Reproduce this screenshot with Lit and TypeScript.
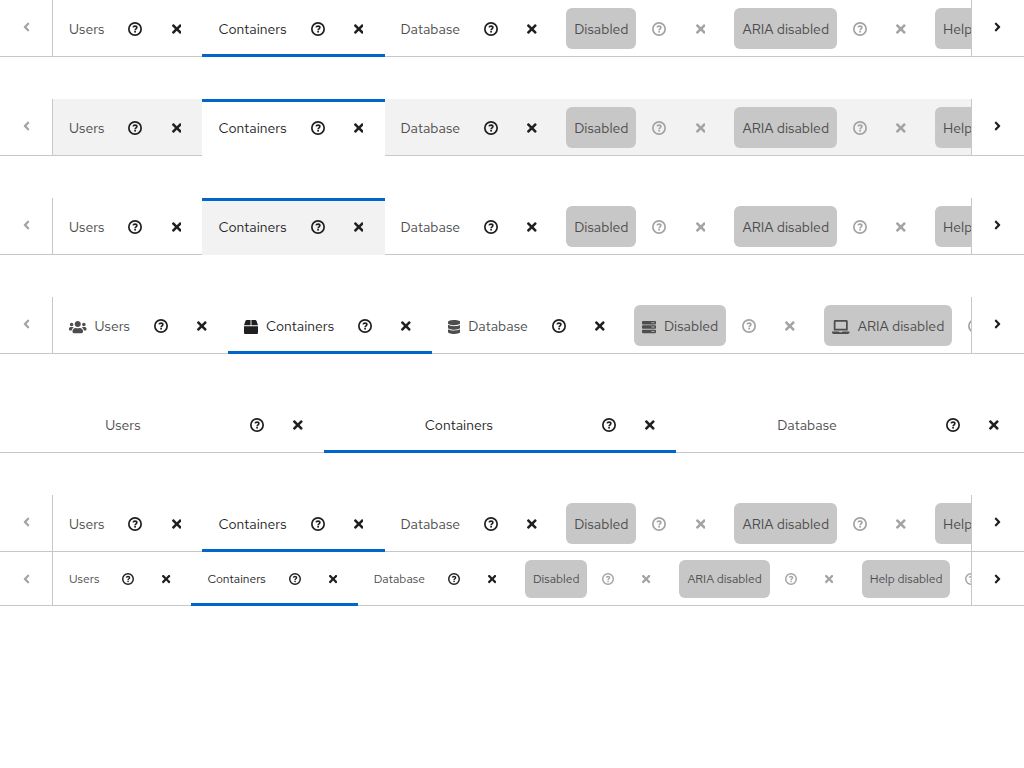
import { LitElement, html, css, svg, nothing } from "lit";
import { customElement, property } from "lit/decorators.js";
import { classMap } from "lit/directives/class-map.js";

interface Tab {
  label: string;
  icon: string;
  disabled?: boolean;
}

const TABS: Tab[] = [
  { label: "Users", icon: "users" },
  { label: "Containers", icon: "box" },
  { label: "Database", icon: "database" },
  { label: "Disabled", icon: "server", disabled: true },
  { label: "ARIA disabled", icon: "laptop", disabled: true },
  { label: "Help disabled", icon: "project", disabled: true },
];

const ICONS: Record<string, { width: number; path: string }> = {
  left: {
    width: 256,
    path: "M31.7 239l136-136c9.4-9.4 24.6-9.4 33.9 0l22.6 22.6c9.4 9.4 9.4 24.6 0 33.9L127.9 256l96.4 96.4c9.4 9.4 9.4 24.6 0 33.9L201.7 409c-9.4 9.4-24.6 9.4-33.9 0l-136-136c-9.5-9.4-9.5-24.6-.1-34z",
  },
  right: {
    width: 256,
    path: "M224.3 273l-136 136c-9.4 9.4-24.6 9.4-33.9 0l-22.6-22.6c-9.4-9.4-9.4-24.6 0-33.9l96.4-96.4-96.4-96.4c-9.4-9.4-9.4-24.6 0-33.9L54.3 103c9.4-9.4 24.6-9.4 33.9 0l136 136c9.5 9.4 9.5 24.6.1 34z",
  },
  close: {
    width: 352,
    path: "M242.72 256l100.07-100.07c12.28-12.28 12.28-32.19 0-44.48l-22.24-22.24c-12.28-12.28-32.19-12.28-44.48 0L176 189.28 75.93 89.21c-12.28-12.28-32.19-12.28-44.48 0L9.21 111.45c-12.28 12.28-12.28 32.19 0 44.48L109.28 256 9.21 356.07c-12.28 12.28-12.28 32.19 0 44.48l22.24 22.24c12.28 12.28 32.2 12.28 44.48 0L176 322.72l100.07 100.07c12.28 12.28 32.2 12.28 44.48 0l22.24-22.24c12.28-12.28 12.28-32.19 0-44.48L242.72 256z",
  },
  users: {
    width: 640,
    path: "M96 224c35.3 0 64-28.7 64-64s-28.7-64-64-64-64 28.7-64 64 28.7 64 64 64zm448 0c35.3 0 64-28.7 64-64s-28.7-64-64-64-64 28.7-64 64 28.7 64 64 64zm32 32h-64c-17.6 0-33.5 7.1-45.1 18.6 40.3 22.1 68.9 62 75.1 109.4h66c17.7 0 32-14.3 32-32v-32c0-35.3-28.7-64-64-64zm-256 0c61.9 0 112-50.1 112-112S381.9 32 320 32 208 82.1 208 144s50.1 112 112 112zm76.8 32h-8.3c-20.8 10-43.9 16-68.5 16s-47.6-6-68.5-16h-8.3C179.6 288 128 339.6 128 403.2V432c0 26.5 21.5 48 48 48h288c26.5 0 48-21.5 48-48v-28.8c0-63.6-51.6-115.2-115.2-115.2zm-223.7-13.4C161.5 263.1 145.6 256 128 256H64c-35.3 0-64 28.7-64 64v32c0 17.7 14.3 32 32 32h65.9c6.3-47.4 34.9-87.3 75.2-109.4z",
  },
  box: {
    width: 512,
    path: "M509.5 184.6L458.9 32.8C452.4 13.2 434.1 0 413.4 0H272v192h238.7c-.4-2.5-.4-5-1.2-7.4zM240 0H98.6c-20.7 0-39 13.2-45.5 32.8L2.5 184.6c-.8 2.4-.8 4.9-1.2 7.4H240V0zM0 224v240c0 26.5 21.5 48 48 48h416c26.5 0 48-21.5 48-48V224H0z",
  },
  database: {
    width: 448,
    path: "M448 73.143v45.714C448 159.143 347.667 192 224 192S0 159.143 0 118.857V73.143C0 32.857 100.333 0 224 0s224 32.857 224 73.143zM448 176v102.857C448 319.143 347.667 352 224 352S0 319.143 0 278.857V176c48.125 33.143 136.208 48.572 224 48.572S399.874 209.143 448 176zm0 160v102.857C448 479.143 347.667 512 224 512S0 479.143 0 438.857V336c48.125 33.143 136.208 48.572 224 48.572S399.874 369.143 448 336z",
  },
  server: {
    width: 512,
    path: "M480 160H32c-17.673 0-32-14.327-32-32V64c0-17.673 14.327-32 32-32h448c17.673 0 32 14.327 32 32v64c0 17.673-14.327 32-32 32zm-48-88c-13.255 0-24 10.745-24 24s10.745 24 24 24 24-10.745 24-24-10.745-24-24-24zm-64 0c-13.255 0-24 10.745-24 24s10.745 24 24 24 24-10.745 24-24-10.745-24-24-24zm112 248H32c-17.673 0-32-14.327-32-32v-64c0-17.673 14.327-32 32-32h448c17.673 0 32 14.327 32 32v64c0 17.673-14.327 32-32 32zm-48-88c-13.255 0-24 10.745-24 24s10.745 24 24 24 24-10.745 24-24-10.745-24-24-24zm-64 0c-13.255 0-24 10.745-24 24s10.745 24 24 24 24-10.745 24-24-10.745-24-24-24zm112 248H32c-17.673 0-32-14.327-32-32v-64c0-17.673 14.327-32 32-32h448c17.673 0 32 14.327 32 32v64c0 17.673-14.327 32-32 32zm-48-88c-13.255 0-24 10.745-24 24s10.745 24 24 24 24-10.745 24-24-10.745-24-24-24zm-64 0c-13.255 0-24 10.745-24 24s10.745 24 24 24 24-10.745 24-24-10.745-24-24-24z",
  },
  laptop: {
    width: 640,
    path: "M624 416H381.54c-.74 19.81-14.71 32-32.74 32H288c-18.69 0-33.02-17.47-32.77-32H16c-8.8 0-16 7.2-16 16v16c0 35.2 28.8 64 64 64h512c35.2 0 64-28.8 64-64v-16c0-8.8-7.2-16-16-16zM576 48c0-26.4-21.6-48-48-48H112C85.6 0 64 21.6 64 48v336h512V48zm-64 272H128V64h384v256z",
  },
  project: {
    width: 640,
    path: "M384 320H256c-17.67 0-32 14.33-32 32v128c0 17.67 14.33 32 32 32h128c17.67 0 32-14.33 32-32V352c0-17.67-14.33-32-32-32zM192 32c0-17.67-14.33-32-32-32H32C14.33 0 0 14.33 0 32v128c0 17.67 14.33 32 32 32h95.72l73.16 128.04C211.98 300.98 232.4 288 256 288h.28L192 175.51V128h224V64H192V32zM608 0H480c-17.67 0-32 14.33-32 32v128c0 17.67 14.33 32 32 32h128c17.67 0 32-14.33 32-32V32c0-17.67-14.33-32-32-32z",
  },
};

const icon = (name: string) => html`
  <svg class="icon" viewBox="0 0 ${ICONS[name].width} 512" aria-hidden="true">
    ${svg`<path fill="currentColor" d=${ICONS[name].path}></path>`}
  </svg>
`;

const helpIcon = html`
  <svg class="icon" viewBox="0 0 14 14" fill="none" stroke="currentColor" aria-hidden="true">
    <circle cx="7" cy="7" r="6.15" stroke-width="1.7"></circle>
    <path d="M5.1 5.4C5.3 4.4 6.1 4.1 7 4.1c1.1 0 1.9.6 1.9 1.5C8.9 6.8 7.1 6.8 7.1 8.2" stroke-width="1.6"></path>
    <circle cx="7.1" cy="9.8" r=".95" fill="currentColor" stroke="none"></circle>
  </svg>
`;

@customElement("tab-strip")
export class TabStrip extends LitElement {
  @property() variant: "default" | "boxed" | "secondary" = "default";
  @property({ type: Boolean }) icons = false;
  @property({ type: Boolean }) fill = false;
  @property({ type: Boolean }) small = false;
  @property() label = "Tabs";

  static styles = css`
    :host {
      display: block;
    }
    .strip {
      position: relative;
      display: flex;
      font-size: 14px;
      line-height: 21px;
      color: #1f1f1f;
    }
    .strip::after {
      content: "";
      position: absolute;
      inset: auto 0 0 0;
      z-index: 1;
      height: 1px;
      background: #c7c7c7;
      pointer-events: none;
    }
    button {
      margin: 0;
      border: 0;
      background: none;
      font: inherit;
      color: inherit;
      cursor: pointer;
    }
    button:disabled,
    button[aria-disabled="true"] {
      cursor: default;
    }
    .icon {
      display: block;
      flex: none;
      height: 14px;
    }
    .scroll {
      display: flex;
      flex: none;
      align-items: flex-start;
      justify-content: center;
      box-sizing: border-box;
      width: 53px;
      padding: 20px 0;
    }
    .prev {
      border-right: 1px solid #c7c7c7;
    }
    .next {
      padding-right: 2px;
      border-left: 1px solid #c7c7c7;
    }
    .scroll:disabled {
      color: #a3a3a3;
    }
    .list {
      display: flex;
      flex: 1;
      min-width: 0;
      overflow: hidden;
    }
    .tab {
      position: relative;
      display: flex;
      flex: none;
      align-items: center;
      padding: 8px;
    }
    .active {
      z-index: 2;
    }
    .active::after {
      content: "";
      position: absolute;
      inset: auto 0 0 0;
      height: 3px;
      background: #0066cc;
    }
    .link {
      display: flex;
      align-items: center;
      justify-content: center;
      gap: 8px;
      padding: 11px 8px 9px;
      border-radius: 6px;
      color: #4d4d4d;
      white-space: nowrap;
    }
    .active .link {
      color: #1f1f1f;
    }
    .off .link {
      background: #c7c7c7;
    }
    .action {
      display: flex;
      flex: none;
      justify-content: center;
      width: 30px;
      padding: 9px 0 8px;
      margin-left: 8px;
    }
    .action + .action {
      margin: 0 3px 0 11px;
    }
    .off .action {
      color: #a3a3a3;
    }

    .boxed .tab {
      background: #f2f2f2;
    }
    .boxed .active {
      background: #ffffff;
    }
    .secondary .active {
      background: #f2f2f2;
    }
    .boxed .active::after,
    .secondary .active::after {
      inset: 0 0 auto 0;
    }

    .fill .list {
      padding: 0 4px;
    }
    .fill .tab,
    .fill .link {
      flex-grow: 1;
    }

    .small {
      font-size: 12px;
      line-height: 18px;
    }
    .small .link {
      padding: 10px 8px;
    }
    .small .tab .icon {
      height: 12px;
    }
    .small .action {
      width: 26px;
      padding: 8px 0;
    }
    .small .action + .action {
      margin: 0 4px 0 12px;
    }
  `;

  private renderTab(tab: Tab) {
    const active = tab.label === "Containers";
    const off = !!tab.disabled;
    return html`
      <div class=${classMap({ tab: true, active, off })} role="presentation">
        <button
          class="link"
          role="tab"
          aria-selected=${active}
          ?disabled=${tab.label === "Disabled"}
          aria-disabled=${off}
        >
          ${this.icons ? icon(tab.icon) : nothing}<span>${tab.label}</span>
        </button>
        <button class="action" aria-label="Help for ${tab.label}" ?disabled=${off}>${helpIcon}</button>
        <button class="action" aria-label="Close ${tab.label}" ?disabled=${off}>${icon("close")}</button>
      </div>
    `;
  }

  render() {
    const tabs = this.fill ? TABS.slice(0, 3) : TABS;
    const classes = { strip: true, [this.variant]: true, fill: this.fill, small: this.small };
    return html`
      <div class=${classMap(classes)}>
        ${this.fill
          ? nothing
          : html`<button class="scroll prev" aria-label="Scroll back" disabled>${icon("left")}</button>`}
        <div class="list" role="tablist" aria-label=${this.label}>${tabs.map((tab) => this.renderTab(tab))}</div>
        ${this.fill
          ? nothing
          : html`<button class="scroll next" aria-label="Scroll forward">${icon("right")}</button>`}
      </div>
    `;
  }
}

@customElement("app-root")
export class AppRoot extends LitElement {
  static styles = css`
    :host {
      display: block;
      background: #ffffff;
      font-family: "Red Hat Text", "Liberation Sans", sans-serif;
    }
    .page {
      display: flex;
      flex-direction: column;
      gap: 42px;
    }
  `;

  render() {
    return html`
      <main class="page">
        <tab-strip label="Default tabs"></tab-strip>
        <tab-strip label="Boxed tabs" variant="boxed"></tab-strip>
        <tab-strip label="Secondary boxed tabs" variant="secondary"></tab-strip>
        <tab-strip label="Tabs with icons" icons></tab-strip>
        <tab-strip label="Filled tabs" fill></tab-strip>
        <div class="pair">
          <tab-strip label="Primary tabs"></tab-strip>
          <tab-strip label="Subtabs" small></tab-strip>
        </div>
      </main>
    `;
  }
}
